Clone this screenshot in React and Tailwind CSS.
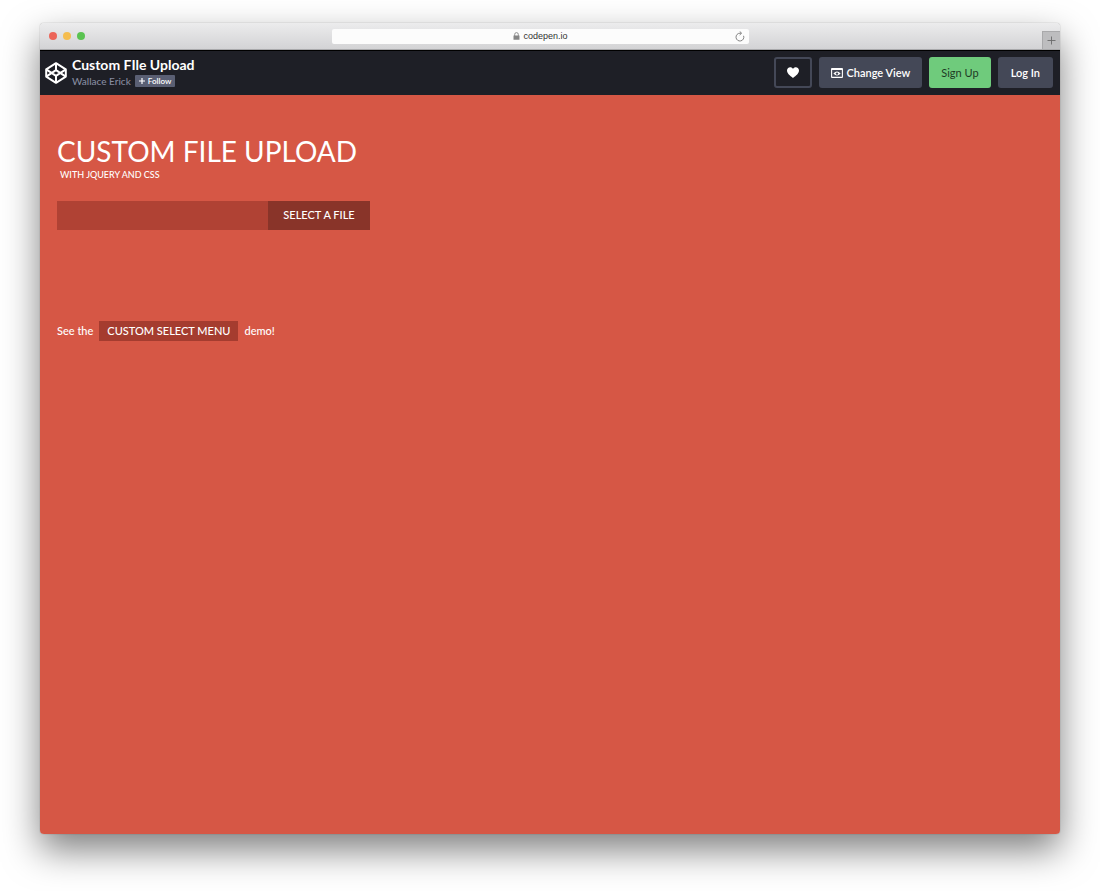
import { useRef, useState } from 'react';

const TRAFFIC_LIGHTS = [
  { label: 'Close',    color: 'bg-[#ec6559]' },
  { label: 'Minimize', color: 'bg-[#f5bd4f]' },
  { label: 'Zoom',     color: 'bg-[#5ac351]' },
];

function LockIcon() {
  return (
    <svg viewBox="0 0 7 8" className="w-[7px] h-[8px]" aria-hidden="true">
      <path d="M1.7 4V2.4a1.8 1.8 0 013.6 0V4" fill="none" stroke="#858585" strokeWidth="0.9"/>
      <rect x="0.5" y="3.4" width="6" height="4.3" rx="0.3" fill="#858585"/>
    </svg>
  );
}

function ReloadIcon() {
  return (
    <svg viewBox="0 0 10 11" className="w-[10px] h-[11px]" fill="none" stroke="#777" strokeWidth="0.9" aria-hidden="true">
      <path d="M8.6 4.8A3.9 3.9 0 115 2.2h1.2"/>
      <path d="M4.7 0.4l1.9 1.8-1.9 1.8"/>
    </svg>
  );
}

function CodepenLogo() {
  return (
    <svg viewBox="0 0 22 22" className="w-[22px] h-[22px]" fill="none" stroke="white" strokeWidth="2" strokeLinejoin="round" aria-hidden="true">
      <path d="M11 1.2L20.8 7.4v7.2L11 20.8 1.2 14.6V7.4z"/>
      <path d="M1.2 7.4L11 13.8l9.8-6.4M1.2 14.6L11 8.2l9.8 6.4M11 1.2v7M11 13.8v7"/>
    </svg>
  );
}

function HeartIcon() {
  return (
    <svg viewBox="0 0 12 11" className="w-3 h-[11px]" fill="white" aria-hidden="true">
      <path d="M6 11C2.8 8.7 0 6.5 0 3.6 0 1.6 1.4 0.2 3.2 0.2 4.4 0.2 5.4 0.8 6 1.8 6.6 0.8 7.6 0.2 8.8 0.2 10.6 0.2 12 1.6 12 3.6 12 6.5 9.2 8.7 6 11z"/>
    </svg>
  );
}

function ViewIcon() {
  return (
    <svg viewBox="0 0 12 10" className="w-3 h-[10px]" fill="none" stroke="white" aria-hidden="true">
      <rect x="0.6" y="0.6" width="10.8" height="8.8" rx="0.4" strokeWidth="1.1"/>
      <path d="M0.6 1.2h10.8" strokeWidth="1.6"/>
      <path d="M2.4 5.6Q6 1.6 9.6 5.6 6 9.6 2.4 5.6z" fill="white" stroke="none"/>
      <circle cx="6" cy="5.6" r="1.2" fill="#444857" stroke="none"/>
    </svg>
  );
}

function BrowserBar() {
  return (
    <div className="h-[27px] grid grid-cols-[292fr_417fr_311fr] items-center bg-linear-to-b from-[#ececed] to-[#d3d3d5] border-b border-[#a9a9ab] flex-shrink-0">
      <div className="flex gap-[6px] pl-[9px]">
        {TRAFFIC_LIGHTS.map(({ label, color }) => (
          <button key={label} aria-label={label} className={`w-2 h-2 rounded-full ${color}`}/>
        ))}
      </div>
      <div className="h-[15px] rounded-[2px] bg-[#fcfcfc] flex items-center px-1">
        <div className="flex-1 flex items-center justify-center gap-[3px] pl-[10px] font-['Liberation_Sans',sans-serif] text-[9px] leading-none text-[#333]">
          <LockIcon/>
          <span>codepen.io</span>
        </div>
        <button aria-label="Reload"><ReloadIcon/></button>
      </div>
      <button aria-label="New tab" className="w-[18px] h-[18px] justify-self-end self-end bg-[#bdbdbf] border-l border-t border-[#a9a9ab] flex items-center justify-center">
        <svg viewBox="0 0 9 9" className="w-[9px] h-[9px]" stroke="#6b6b6b" strokeWidth="0.9" aria-hidden="true">
          <path d="M4.5 0.5v8M0.5 4.5h8"/>
        </svg>
      </button>
    </div>
  );
}

function PenHeader() {
  return (
    <header className="h-[45px] flex items-center justify-between pl-[5px] pr-[7px] bg-[#1e1f26] shadow-[inset_0_1px_0_#000] flex-shrink-0">
      <div className="flex items-center gap-[5px]">
        <a href="#home" aria-label="CodePen"><CodepenLogo/></a>
        <div>
          <h1 className="text-[14px] leading-4 font-bold text-white">Custom FIle Upload</h1>
          <div className="flex items-center gap-1">
            <a href="#author" className="text-[10px] leading-4 font-medium text-[#868ca0]">Wallace Erick</a>
            <button className="h-3 px-1 flex items-center gap-[3px] rounded-[1px] bg-[#5a5f73] text-[8px] leading-none font-semibold text-white">
              <svg viewBox="0 0 6 6" className="w-[6px] h-[6px]" stroke="white" strokeWidth="1.2" aria-hidden="true"><path d="M3 0v6M0 3h6"/></svg>
              Follow
            </button>
          </div>
        </div>
      </div>

      <div className="flex items-center gap-[7px] text-[11px] leading-none font-semibold text-white">
        <button aria-label="Love this pen" className="w-[38px] h-[31px] flex items-center justify-center rounded-[3px] border-2 border-[#444857]">
          <HeartIcon/>
        </button>
        <button className="h-[31px] px-3 flex items-center gap-[3px] rounded-[3px] bg-[#444857]">
          <ViewIcon/>
          Change View
        </button>
        <button className="h-[31px] px-3 rounded-[3px] bg-[#6fcb7c] font-normal text-[#1e3a24]">Sign Up</button>
        <button className="h-[31px] px-[13px] rounded-[3px] bg-[#444857]">Log In</button>
      </div>
    </header>
  );
}

function FileUpload() {
  const [fileName, setFileName] = useState('');
  const fileRef = useRef(null);

  return (
    <div className="flex h-[29px] mt-5 text-[11px] font-medium">
      <input
        type="text"
        readOnly
        aria-label="Selected file"
        value={fileName}
        className="w-[211px] px-2 bg-[#b04234] outline-none"
      />
      <button onClick={() => fileRef.current.click()} className="w-[102px] bg-[#893429] uppercase">
        Select a file
      </button>
      <input
        ref={fileRef}
        type="file"
        aria-label="File"
        className="hidden"
        onChange={e => setFileName(e.target.files[0]?.name || '')}
      />
    </div>
  );
}

export default function App() {
  return (
    <div className="min-h-screen flex flex-col bg-white pt-[23px] pb-[57px] px-10 font-[Lato,sans-serif]">
      <div className="flex-1 flex flex-col rounded-[4px] overflow-hidden shadow-[0_0_1px_rgba(0,0,0,0.5),0_16px_36px_rgba(0,0,0,0.5)]">
        <BrowserBar/>
        <PenHeader/>

        <main className="flex-1 bg-[#d65745] px-[17px] pt-[39px] text-white">
          <h2 className="text-[28px] leading-[35px] uppercase">Custom File Upload</h2>
          <p className="pl-[3px] text-[9px] leading-3 font-medium uppercase">with jQuery and CSS</p>
          <FileUpload/>
          <p className="mt-[91px] flex items-center gap-[6px] text-[11px] leading-5 font-medium">
            <span>See the</span>
            <a href="#select-menu" className="px-2 bg-[#a53c2f] uppercase">Custom Select Menu</a>
            <span>demo!</span>
          </p>
        </main>
      </div>
    </div>
  );
}
